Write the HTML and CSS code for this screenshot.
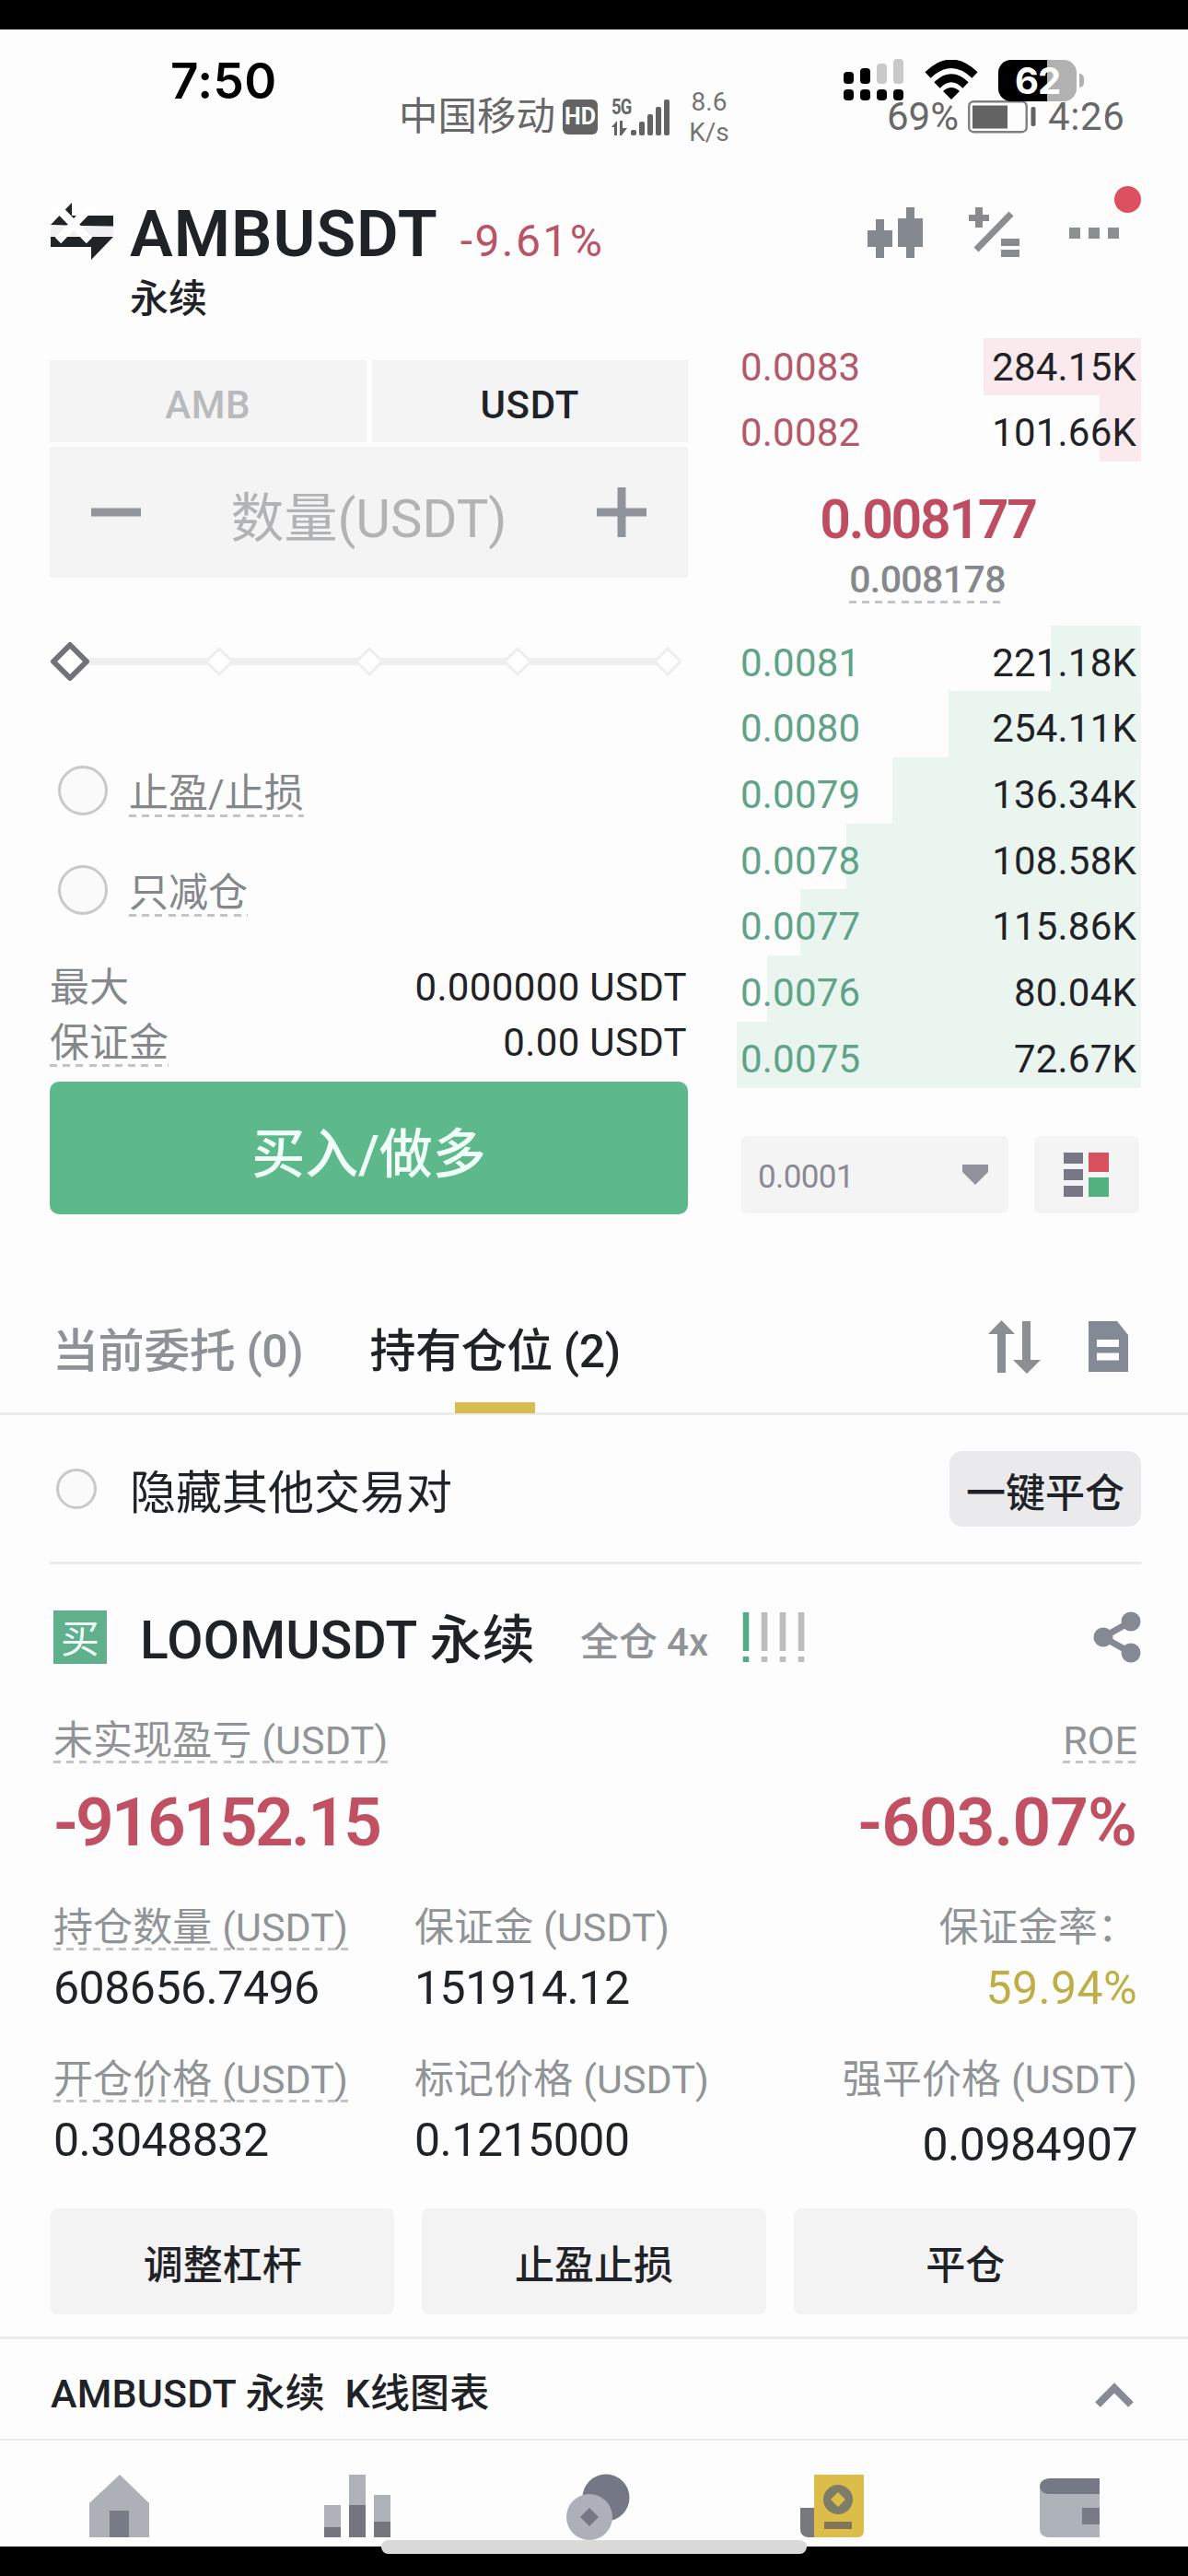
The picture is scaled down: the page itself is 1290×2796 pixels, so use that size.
FILE: index.html
```html
<!DOCTYPE html>
<html lang="zh-CN">
<head>
<meta charset="utf-8">
<title>AMBUSDT 永续</title>
<link rel="stylesheet" href="styles.css">
</head>
<body>
<div class="edge"></div>

<div class="status">
  <div class="carrier">
    <span class="carrier-name">中国移动</span>
    <span class="hd">HD</span>
    <div class="net">
      <span class="net-5g">5G</span>
      <svg width="66" height="44" viewBox="0 0 66 44">
        <g fill="#636363">
          <path d="M0 33 6 26V42H3V33ZM9 26H12V34H17L11 42H9Z"/>
          <rect x="21" y="36" width="6" height="6" rx="2"/><rect x="30" y="27" width="6" height="15" rx="2"/><rect x="39" y="19" width="6" height="23" rx="2"/><rect x="48" y="11" width="6" height="31" rx="2"/><rect x="57" y="3" width="6" height="39" rx="2"/>
        </g>
      </svg>
    </div>
    <div class="speed"><span>8.6</span><span>K/s</span></div>
    <div class="carrier-right">
      <span>69%</span>
      <svg width="74" height="36" viewBox="0 0 74 36">
        <rect x="1.2" y="1.2" width="62.5" height="33" rx="5" fill="none" stroke="#808080" stroke-width="2.4"/>
        <rect x="5" y="5.500" width="38" height="25" fill="#636363"/><rect x="68.500" y="7" width="5" height="21" rx="2" fill="#636363"/>
      </svg>
      <span class="carrier-time">4:26</span>
    </div>
  </div>
  <div class="device">
    <span class="clock">7:50</span>
    <div class="device-right">
      <svg width="66" height="46" viewBox="0 0 66 46">
        <rect x="0" y="14" width="11" height="13" rx="4"/><rect x="18" y="10" width="11" height="17" rx="4"/>
        <g fill="#c9c9c9"><rect x="36" y="5" width="11" height="22" rx="4"/><rect x="54" y="0" width="11" height="27" rx="4"/></g>
        <rect x="0" y="33" width="11" height="12" rx="4"/><rect x="18" y="33" width="11" height="12" rx="4"/><rect x="36" y="33" width="11" height="12" rx="4"/><rect x="54" y="33" width="11" height="12" rx="4"/>
      </svg>
      <svg class="wifi" width="58" height="44" viewBox="0 0 58 44">
        <path d="M29 43 20 34Q29 26 38 34Z"/>
        <path d="M13.500 27.500Q29 12 44.500 27.500" fill="none" stroke="#000" stroke-width="9"/>
        <path d="M3.500 16.500Q29-8 54.500 16.500" fill="none" stroke="#000" stroke-width="9"/>
      </svg>
      <span class="battery">62</span>
      <span class="battery-tip"></span>
    </div>
  </div>
</div>

<header class="header">
  <svg class="swap" width="72" height="66" viewBox="0 0 72 66">
    <g fill="#202327"><path d="M0 24 23 0V14H68V26ZM0 37H68L44 62V48H0Z"/></g>
    <path d="M0 25.500H68V36H0Z" fill="#f0f0f1"/>
    <path d="M6 4 42 41M44 4 8 41" stroke="#fff" stroke-width="9"/>
  </svg>
  <div class="pair">
    <div class="pair-top"><h1>AMBUSDT</h1><span class="change">-9.61%</span></div>
    <div class="pair-kind">永续</div>
  </div>
  <div class="tools">
    <svg width="60" height="56" viewBox="0 0 60 56" fill="#84888f"><path d="M9 13H18V25H27V43H18V55H9V43H0V25H9ZM42 0H51V12H60V43H51V55H42V43H33V12H42Z"/></svg>
    <svg width="56" height="56" viewBox="0 0 56 56" fill="#878b8e"><path d="M7 0H15V8H22V15H15V22H7V15H0V8H7ZM35 34H55V42H35ZM35 46H55V54H35Z"/><path d="M8 46 46 7" stroke="#8a8e90" stroke-width="7"/></svg>
    <div class="more"><i></i><i></i><i></i><b></b></div>
  </div>
</header>

<main>
<section class="trade">
  <div class="form">
    <div class="units"><div class="unit">AMB</div><div class="unit on">USDT</div></div>
    <div class="qty">
      <svg width="54" height="54" viewBox="0 0 54 54"><path d="M0 27H54" stroke="#8f959b" stroke-width="9"/></svg>
      <span>数量(USDT)</span>
      <svg width="54" height="54" viewBox="0 0 54 54"><path d="M0 27H54M27 0V54" stroke="#8f939c" stroke-width="9"/></svg>
    </div>
    <svg class="slider" width="693" height="44" viewBox="0 0 693 44">
      <path d="M40 22H660" stroke="#efefef" stroke-width="8"/>
      <g fill="#fefefe" stroke="#eeeeef" stroke-width="3" stroke-linejoin="round">
        <path d="M184 8 198 22 184 36 170 22ZM347 8 361 22 347 36 333 22ZM508 8 522 22 508 36 494 22ZM671 8 685 22 671 36 657 22Z"/>
      </g>
      <path d="M22 4 40 22 22 40 4 22Z" fill="#fff" stroke="#707278" stroke-width="6" stroke-linejoin="round"/>
    </svg>
    <div class="check"><i class="radio"></i><span class="dash">止盈/止损</span></div>
    <div class="check"><i class="radio"></i><span class="dash">只减仓</span></div>
    <div class="limit first"><span class="dim">最大</span><span>0.000000 USDT</span></div>
    <div class="limit"><span class="dim dash">保证金</span><span>0.00 USDT</span></div>
    <div class="buy">买入/做多</div>
  </div>

  <div class="book">
    <div class="row ask top" style="--depth:39%"><span>0.0083</span><b>284.15K</b></div>
    <div class="row ask" style="--depth:10.3%"><span>0.0082</span><b>101.66K</b></div>
    <div class="last">0.008177</div>
    <div class="mark"><span class="dash">0.008178</span></div>
    <div class="row bid" style="--depth:22.3%"><span>0.0081</span><b>221.18K</b></div>
    <div class="row bid" style="--depth:47.6%"><span>0.0080</span><b>254.11K</b></div>
    <div class="row bid" style="--depth:61.5%"><span>0.0079</span><b>136.34K</b></div>
    <div class="row bid" style="--depth:72.9%"><span>0.0078</span><b>108.58K</b></div>
    <div class="row bid" style="--depth:84.3%"><span>0.0077</span><b>115.86K</b></div>
    <div class="row bid" style="--depth:92.5%"><span>0.0076</span><b>80.04K</b></div>
    <div class="row bid" style="--depth:100%"><span>0.0075</span><b>72.67K</b></div>
    <div class="controls">
      <div class="step"><span>0.0001</span><svg width="28" height="22" viewBox="0 0 28 22"><path d="M0 0H28V8L14 22 0 8Z" fill="#92929e"/></svg></div>
      <div class="view"><svg width="50" height="48" viewBox="0 0 50 48"><path d="M0 0H21V12H0ZM0 18H21V30H0ZM0 36H21V48H0Z" fill="#777785"/><path d="M27 0H49V21H27Z" fill="#d8515f"/><path d="M27 27H49V48H27Z" fill="#52b27f"/></svg></div>
    </div>
  </div>
</section>

<nav class="tabs">
  <span class="tab">当前委托 (0)</span>
  <span class="tab on">持有仓位 (2)</span>
  <svg class="sort" width="58" height="58" viewBox="0 0 58 58" fill="#8b8e93"><path d="M10 57V15H0L14.500 0 29 15H19V57ZM37 1H46V43H57L42 58 27 43H37Z"/></svg>
  <svg width="44" height="56" viewBox="0 0 44 56"><path d="M0 0H31L43 15V55H0Z" fill="#838a95"/><path d="M9 24H33M9 38.500H33" stroke="#fdfdfd" stroke-width="8"/></svg>
</nav>

<section class="hide">
  <i class="radio small"></i><span class="hide-text">隐藏其他交易对</span><span class="close-all">一键平仓</span>
</section>

<section class="position">
  <div class="pos-head">
    <span class="side">买</span>
    <h2>LOOMUSDT 永续</h2>
    <span class="margin-mode">全仓<em>4x</em></span>
    <svg width="70" height="58" viewBox="0 0 70 58"><path d="M4 2V44M4 50V56" stroke="#50ad85" stroke-width="6.500"/><path d="M24 2V44M24 50V56M44 2V44M44 50V56M64 2V44M64 50V56" stroke="#bdbdbd" stroke-width="6.500"/></svg>
    <svg class="share" width="52" height="56" viewBox="0 0 52 56" fill="#848993"><path d="M41 11 11 28 41 45" fill="none" stroke="#848993" stroke-width="7"/><circle cx="41" cy="11" r="10.500"/><circle cx="11" cy="28" r="10.500"/><circle cx="41" cy="45" r="10.500"/></svg>
  </div>
  <div class="pnl">
    <div><span class="label dash">未实现盈亏 (USDT)</span><strong>-916152.15</strong></div>
    <div class="right"><span class="label dash">ROE</span><strong class="roe">-603.07%</strong></div>
  </div>
  <div class="stats">
    <div><span class="label dash">持仓数量 (USDT)</span><p>608656.7496</p></div>
    <div><span class="label">保证金 (USDT)</span><p>151914.12</p></div>
    <div class="right"><span class="label">保证金率：</span><p class="gold">59.94%</p></div>
    <div><span class="label dash">开仓价格 (USDT)</span><p>0.3048832</p></div>
    <div><span class="label">标记价格 (USDT)</span><p>0.1215000</p></div>
    <div class="right"><span class="label">强平价格 (USDT)</span><p class="low">0.0984907</p></div>
  </div>
  <div class="actions"><span>调整杠杆</span><span>止盈止损</span><span>平仓</span></div>
</section>

<section class="chart">
  <span>AMBUSDT 永续&nbsp; K线图表</span>
  <svg width="42" height="28" viewBox="0 0 42 28"><path d="M3 24 21 6 39 24" fill="none" stroke="#858a94" stroke-width="8"/></svg>
</section>
</main>

<footer class="nav">
  <div><svg width="66" height="70" viewBox="0 0 66 70"><path d="M0 32 33 1 65 32V69H0Z" fill="#adb0b7"/><path d="M22 40H43V69H22Z" fill="#777b85"/></svg></div>
  <div><svg width="72" height="70" viewBox="0 0 72 70"><path d="M0 34H18V58H0ZM27 1H45V34H27ZM54 23H72V52H54Z" fill="#afb1b9"/><path d="M0 58H18V69H0ZM27 34H45V69H27ZM54 52H72V69H54Z" fill="#74757f"/></svg></div>
  <div><svg class="coins" width="70" height="73" viewBox="0 0 70 73"><circle cx="43" cy="26" r="25.500" fill="#737884"/><circle cx="25" cy="47" r="25" fill="#adb0b8"/><path d="M25 37 35 47 25 57 15 47Z" fill="#737884"/></svg></div>
  <div><svg width="70" height="70" viewBox="0 0 70 70"><path d="M0 37H16V69H8Q0 68 0 60Z" fill="#77797f"/><path d="M15 1H69V62Q69 69 62 69H15Z" fill="#dcbd49"/><circle cx="41" cy="28" r="16" fill="#7d7c66"/><path d="M41 20 49 28 41 36 33 28Z" fill="#dcbd49"/><path d="M26 52H56V60H26Z" fill="#82765a"/></svg></div>
  <div><svg width="66" height="70" viewBox="0 0 66 70"><path d="M0 14H65V69H9Q0 68 0 60Z" fill="#aeb2bb"/><path d="M10 5H65V22H8Q0 20 0 13 1 6 10 5Z" fill="#747985"/><path d="M46 37H65V55H46Z" fill="#777b86"/></svg></div>
  <i class="home-bar"></i>
</footer>
<div class="edge"></div>
</body>
</html>
```
FILE: styles.css
```css
* { box-sizing: border-box; margin: 0; padding: 0; }
body { width: 1290px; background: #fdfdfd; color: #1f2226; font: 400 42px/60px Roboto, "Noto Sans CJK SC", sans-serif; white-space: nowrap; }
svg { display: block; flex: none; }
i, em { font-style: normal; }
.edge { height: 32px; background: #000; }

/* status bars: the device bar lies over the carrier bar */
.status { position: relative; height: 158px; }
.carrier { display: flex; align-items: center; height: 60px; padding-left: 433px; position: relative; top: 65px; color: #686868; }
.carrier-name { font-size: 42.5px; width: 178px; }
.hd { width: 38px; height: 38px; border-radius: 6px; background: #636363; color: #fff; font: 700 25px/38px Roboto, sans-serif; text-align: center; }
.net { position: relative; margin-left: 15px; }
.net-5g { position: absolute; left: 0; top: 0; font: 700 23px/24px Roboto, sans-serif; letter-spacing: -1px; transform: scaleX(.8); transform-origin: left; }
.speed { display: flex; flex-direction: column; width: 60px; margin-left: 10px; font-size: 28px; line-height: 33px; text-align: center; color: #747474; }
.carrier-right { display: flex; align-items: center; margin-left: 163px; }
.carrier-right svg { margin: 0 13px 0 10px; }
.carrier-time { letter-spacing: .6px; }
.device { position: absolute; inset: 0; }
.clock { position: absolute; left: 185px; top: 26px; color: #000; font: 600 53px/60px Inter, sans-serif; letter-spacing: .4px; }
.device-right { position: absolute; left: 916px; top: 32px; display: flex; align-items: center; }
.wifi { margin-left: 22px; }
.battery { margin-left: 22px; width: 85px; height: 45px; border-radius: 14px; background: linear-gradient(90deg, #000 53px, #b1b1b1 53px); color: #fff; font: 700 40px/46px Inter, sans-serif; text-align: center; letter-spacing: -1px; }
.battery-tip { margin-left: 3px; width: 5px; height: 15px; border-radius: 0 8px 8px 0; background: #b1b1b1; }

.header { display: flex; height: 177px; padding: 0 54px 0 55px; }
.swap { margin-top: 30px; }
.pair { margin-left: 14px; }
.pair-top { display: flex; align-items: center; height: 80px; margin-top: 24px; }
h1 { font-size: 70px; font-weight: 600; letter-spacing: 1px; }
.change { margin: 16px 0 0 24px; font-size: 48px; color: #bb5365; letter-spacing: 2.4px; }
.pair-kind { margin-top: 1px; line-height: 60px; font-weight: 500; }
.tools { display: flex; gap: 50px; margin: 35px 0 0 auto; height: 56px; }
.more { display: flex; gap: 9px; position: relative; width: 78px; padding: 22px 0 0 3px; }
.more i { width: 12px; height: 12px; background: #8b8f92; }
.more b { position: absolute; left: 66px; top: -23px; width: 29px; height: 29px; margin-left: -14px; border-radius: 50%; background: #dc505f; }

.trade { display: flex; justify-content: space-between; padding: 0 51px 0 54px; height: 951px; }
.form { width: 693px; padding-top: 24px; }
.units { display: flex; gap: 6px; margin-bottom: 5px; }
.unit { flex: 1; height: 89px; background: #f4f4f5; line-height: 97px; text-align: center; font-weight: 500; color: #b8babc; letter-spacing: .7px; }
.unit.on { color: #1f2226; }
.qty { display: flex; align-items: center; justify-content: space-between; height: 142px; padding: 0 45px; background: #f4f4f5; border-radius: 4px; font-size: 58px; color: #b1b3b5; }
.qty span { padding-top: 13px; }
.slider { margin-top: 69px; }
.check { display: flex; align-items: center; height: 60px; margin-top: 48px; color: #85888b; font-size: 43px; }
.slider + .check { margin-top: 88px; }
.check .dash { margin: 6px 0 0 23px; }
.radio { width: 54px; height: 54px; margin-left: 9px; border: 3px solid #c9c9ca; border-radius: 50%; background: #fafafa; }
.dash { display: inline-block; height: 52px; line-height: 52px; background: repeating-linear-gradient(90deg, #c3c4c6 0 8px, transparent 8px 14.2px) bottom / 100% 3px no-repeat; }
.limit { display: flex; align-items: center; justify-content: space-between; height: 60px; padding: 2px 1px 0 0; letter-spacing: .35px; }
.limit.first { margin-top: 45px; }
.dim { color: #85888b; font-size: 43px; letter-spacing: 0; }
.buy { height: 144px; margin-top: 13px; border-radius: 10px; background: #5db88b; color: #f0fff8; font-size: 58px; font-weight: 500; line-height: 158px; text-align: center; }

.book { width: 439px; }
.row { display: flex; justify-content: space-between; align-items: center; height: 71.7px; padding: 10px 5px 0 4px; background: linear-gradient(var(--fill), var(--fill)) right / var(--depth) 100% no-repeat; letter-spacing: .2px; }
.row.top { height: 62px; padding-top: 2px; }
.row b { font-weight: 400; }
.ask { --fill: #fae9ed; color: #b4596b; }
.bid { --fill: #eaf5f0; color: #5fa388; }
.row b { color: #1f2226; }
.last { margin: 28px 24px 0 0; height: 70px; font-size: 59px; font-weight: 600; line-height: 70px; letter-spacing: -2.3px; text-align: center; color: #bf4d61; }
.mark { margin: 4px 25px 24px 0; height: 52px; display: flex; justify-content: center; font-size: 41px; font-weight: 500; letter-spacing: -.6px; color: #86898c; }
.controls { display: flex; justify-content: space-between; height: 84px; margin: 52px 2px 0 5px; }
.step, .view { display: flex; align-items: center; background: #f4f4f5; border-radius: 6px; }
.step { width: 290px; justify-content: space-between; padding: 0 22px 0 18px; font-size: 35px; color: #8a8994; letter-spacing: -.6px; }
.step span { padding-top: 7px; }
.view { width: 114px; justify-content: center; }

.tabs { display: flex; align-items: center; padding: 118px 64px 37px 57px; border-bottom: 3px solid #ebebeb; font-size: 50px; font-weight: 500; line-height: 63px; height: 218px; letter-spacing: -.4px; color: #8e9296; }
.tab { position: relative; height: 60px; }
.tab.on { margin-left: 72px; color: #1f2226; }
.tab.on::after { content: ""; position: absolute; left: 93px; bottom: -38px; width: 87px; height: 12px; background: #d9bc4f; }
.sort { margin: -8px 51px 0 auto; }
.tabs svg:last-child { margin-top: -8px; }

.hide { display: flex; align-items: center; margin: 0 51px 0 54px; padding: 39px 0 38px; border-bottom: 3px solid #ebebeb; font-size: 50px; }
.radio.small { width: 44px; height: 44px; margin-left: 7px; }
.hide-text { margin: 10px 0 0 36px; }
.close-all { margin-left: auto; width: 208px; height: 82px; border-radius: 14px; background: #eaeaec; font-size: 43px; font-weight: 500; line-height: 92px; text-align: center; }

.position { padding: 50px 55px 0 58px; }
.pos-head { display: flex; align-items: center; height: 58px; }
.side { width: 58px; height: 58px; background: #60b08c; color: #effff8; font-size: 42px; line-height: 63px; text-align: center; }
h2 { margin: 8px 0 0 36px; font-size: 57px; font-weight: 500; width: 478px; letter-spacing: .2px; }
.margin-mode { width: 176px; margin-top: 11px; font-weight: 500; color: #919497; }
.margin-mode em { margin-left: 10px; }
.share { margin: 0 -4px 0 auto; }
.label { display: inline-block; height: 50px; line-height: 51px; font-size: 43px; letter-spacing: .1px; color: #919497; }
.right { text-align: right; }
.pnl { display: flex; justify-content: space-between; margin-top: 58px; height: 153px; }
.pnl div { display: flex; flex-direction: column; align-items: flex-start; }
.pnl .right { align-items: flex-end; }
strong { margin-top: 24px; font-size: 73px; font-weight: 600; line-height: 80px; letter-spacing: -2.7px; color: #c05062; }
.roe { letter-spacing: -.9px; margin-right: 1px; }
.stats { display: grid; grid-template-columns: 392px 1fr 1fr; row-gap: 46px; margin-top: 50px; }
.stats > div { display: flex; flex-direction: column; align-items: flex-start; height: 119px; }
.stats > .right { align-items: flex-end; }
.stats p { margin-top: 11px; font-size: 50px; letter-spacing: -.5px; }
.stats .gold { color: #bfae45; letter-spacing: .4px; }
.stats .low { margin-top: 16px; }
.actions { display: grid; grid-template-columns: repeat(3, 1fr); gap: 30px; margin: 46px 0 24px -3px; }
.actions span { height: 115px; border-radius: 8px; background: #f3f3f3; font-size: 43px; font-weight: 500; line-height: 125px; text-align: center; }

.chart { display: flex; align-items: center; justify-content: space-between; height: 113px; padding: 9px 59px 0 55px; border: solid #ebebeb; border-width: 3px 0 2px; font-size: 43px; font-weight: 500; letter-spacing: .15px; }
.chart svg { margin-top: 4px; }

.nav { position: relative; display: flex; height: 115px; }
.nav div { flex: 1; display: flex; justify-content: center; padding: 36px 0 0 2px; }
.coins { margin-left: 7px; }
.home-bar { position: absolute; left: 414px; bottom: -8px; width: 462px; height: 15px; border-radius: 8px; background: #dadada; }
```
